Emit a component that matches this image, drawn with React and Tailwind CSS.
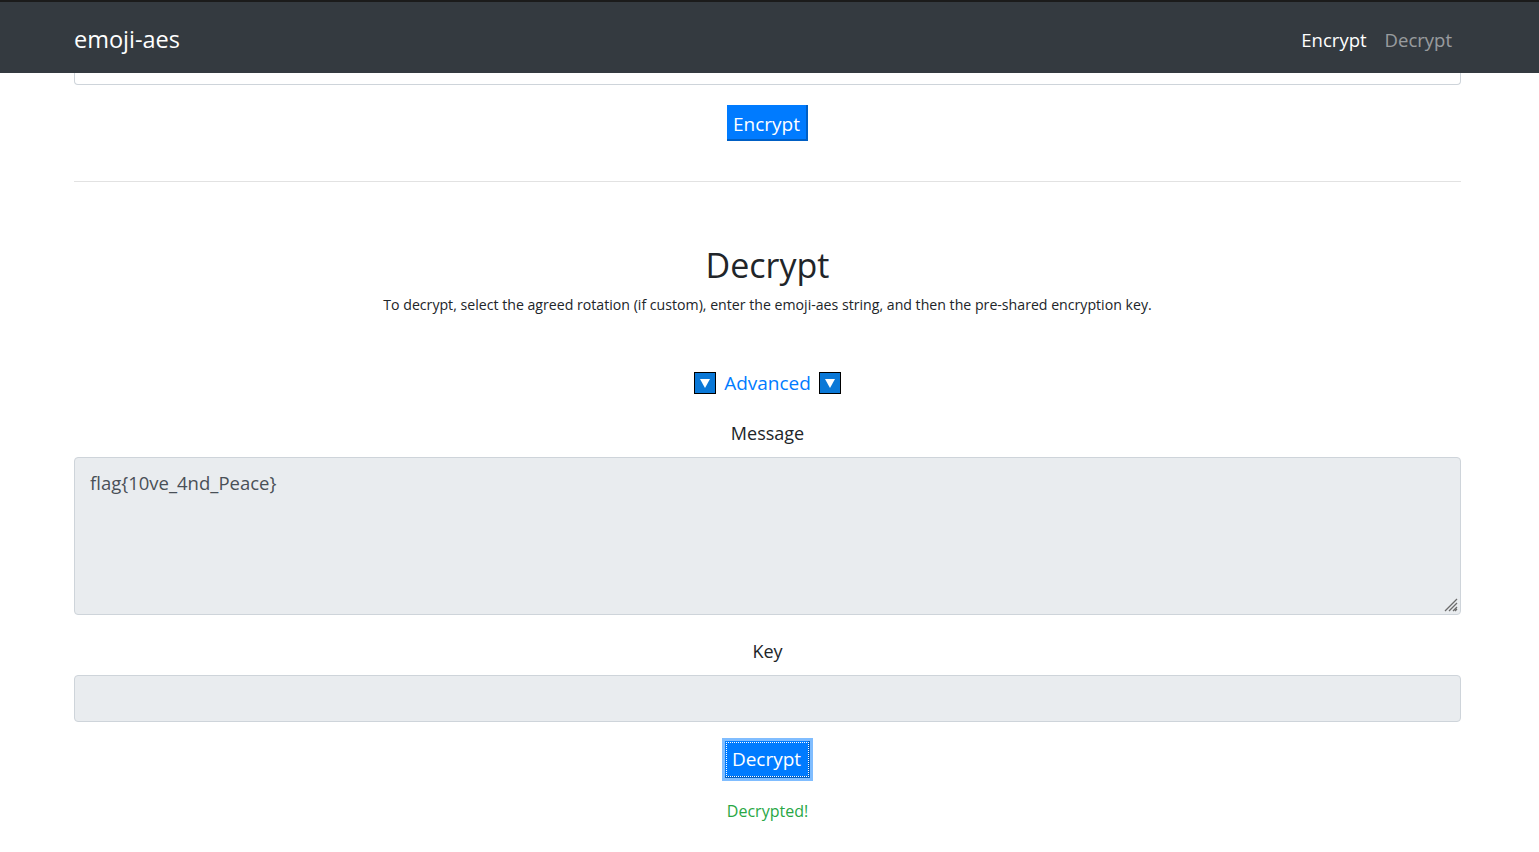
import React from "react";

function Arrow() {
  return (
    <span className="inline-flex h-[22px] w-[22px] items-center justify-center border border-black bg-[#0a78d7]">
      <svg width="10" height="9" viewBox="0 0 10 9">
        <path d="M0 0 H10 L5 9 Z" fill="white" />
      </svg>
    </span>
  );
}

export default function App() {
  return (
    <div className="min-h-[852px] bg-white font-['Open_Sans',sans-serif] text-[#212529]">
      {/* NAVBAR */}
      <div className="h-[2px] bg-[#1b1b1b]" />
      <div className="flex h-[71px] items-center justify-between bg-[#343a40] px-[74px] pt-[4px]">
        <div className="text-[23.5px] text-white">emoji-aes</div>
        <div className="flex items-center gap-[18px] pr-[13px] text-[18.5px]">
          <span className="text-white">Encrypt</span>
          <span className="text-white/50">Decrypt</span>
        </div>
      </div>

      <div className="mx-[74px] w-[1387px]">
        {/* hidden input bottom */}
        <div className="h-[12px] rounded-b-[4px] border-x border-b border-[#ced4da]" />

        <div className="mt-[20px] flex justify-center">
          <button className="h-[36px] border-r-2 border-b-2 border-[#005fc4] bg-[#007bff] px-[6px] pt-[4px] text-[19px] text-white">
            Encrypt
          </button>
        </div>

        <div className="mt-[40px] border-t border-[#e2e2e2]" />

        {/* DECRYPT */}
        <h1 className="mt-[60px] text-center text-[34px] leading-[46px]">Decrypt</h1>
        <p className="mt-[6px] text-center text-[14.15px]">
          To decrypt, select the agreed rotation (if custom), enter the emoji-aes string, and then the pre-shared encryption key.
        </p>

        <div className="mt-[54px] flex items-center justify-center gap-2">
          <Arrow />
          <span className="text-[19px] text-[#007bff]">Advanced</span>
          <Arrow />
        </div>

        <div className="mt-[22px] text-center text-[18px]">Message</div>
        <div className="relative mt-[10px] h-[158px] rounded-[4px] border border-[#ced4da] bg-[#e9ecef] px-[15px] py-[11px] text-[18.5px] text-[#495057]">
          flag{"{"}10ve_4nd_Peace{"}"}
          <svg className="absolute bottom-[2px] right-[2px]" width="16" height="16" viewBox="0 0 16 16">
            <path d="M15 3 L3 15 M15 7 L7 15 M15 11 L11 15 M15 13 L13 15" stroke="#6b6b6b" strokeWidth="1.3" />
          </svg>
        </div>

        <div className="mt-[23px] text-center text-[18px]">Key</div>
        <div className="mt-[10px] h-[47px] rounded-[4px] border border-[#ced4da] bg-[#e9ecef]" />

        <div className="mt-[16px] flex justify-center">
          <div className="bg-[#80bdff] p-[3px]">
            <button className="h-[37px] border-r-2 border-b-2 border-[#005fc4] bg-[#007bff] px-[7px] pt-[3px] text-[19px] text-white outline-1 outline-dotted outline-white -outline-offset-2">
              Decrypt
            </button>
          </div>
        </div>

        <div className="mt-[18px] text-center text-[16px] text-[#28a745]">Decrypted!</div>
      </div>
    </div>
  );
}
